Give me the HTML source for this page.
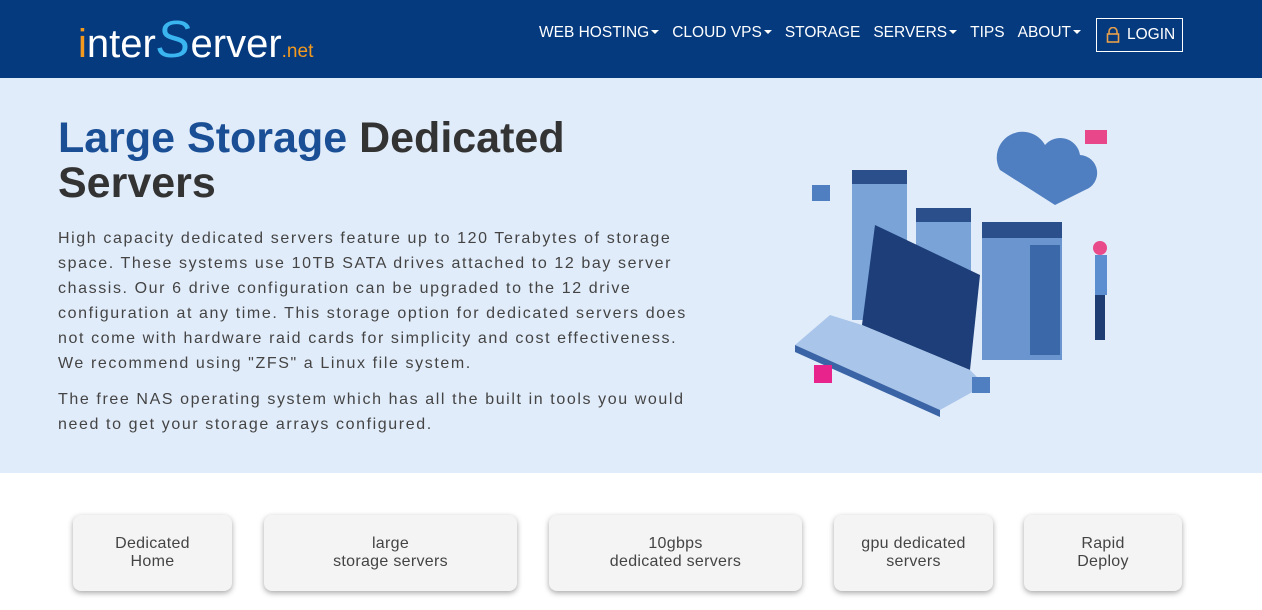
<!DOCTYPE html>
<html><head><style>
*{margin:0;padding:0;box-sizing:border-box}
body{width:1262px;height:610px;overflow:hidden;font-family:"Liberation Sans",sans-serif;background:#fff}
.hd{height:78px;background:#063a7f;position:relative}
.logo{position:absolute;left:78px;top:10px;color:#fff;font-size:40px;font-weight:300;letter-spacing:0px;white-space:nowrap}
.logo .i{color:#f39a1e}.logo .s{color:#3ab5f0;font-size:52px;font-style:italic}
.logo .n{color:#f39a1e;font-size:19px}
.nav{position:absolute;top:24px;left:539px;color:#fff;font-size:15.5px;display:flex;gap:13px;white-space:nowrap}
.nav span.c:after{content:"";display:inline-block;border:4px solid transparent;border-top:4px solid #fff;border-bottom:0;margin-left:2px;vertical-align:3px}
.login{position:absolute;left:1096px;top:18px;width:87px;height:34px;border:1px solid #fff;color:#fff;font-size:15.5px;padding:7px 0 0 30px}
.hero{height:395px;background:#e1ecfa;position:relative}
h1{position:absolute;left:58px;top:38px;font-size:43px;line-height:45px;color:#333;font-weight:bold;white-space:nowrap}
h1 b{color:#1a4f96}
.p{position:absolute;left:58px;top:148px;font-size:16px;line-height:25px;color:#444;letter-spacing:1.6px;white-space:nowrap}
.p2{top:309px}
.card{position:absolute;top:515px;height:76px;background:#f4f4f4;border-radius:8px;box-shadow:0 2px 6px rgba(0,0,0,.35);text-align:center;font-size:16px;line-height:18px;color:#444;padding-top:20px;letter-spacing:.3px}
</style></head><body>
<div class="hd">
<div class="logo"><span class="i">i</span>nter<span class="s">S</span>erver<span class="n">.net</span></div>
<div class="nav"><span class="c">WEB HOSTING</span><span class="c">CLOUD VPS</span><span>STORAGE</span><span class="c">SERVERS</span><span>TIPS</span><span class="c">ABOUT</span></div>
<div class="login"><svg style="position:absolute;left:9px;top:8px" width="14" height="16" viewBox="0 0 14 16"><path d="M3 7V4.5a4 4 0 0 1 8 0V7" fill="none" stroke="#e8a04a" stroke-width="1.6"/><rect x="1.5" y="7" width="11" height="8" fill="none" stroke="#e8a04a" stroke-width="1.6"/></svg>LOGIN</div>
</div>
<div class="hero">
<h1><b>Large Storage</b> Dedicated<br>Servers</h1>
<div class="p">High capacity dedicated servers feature up to 120 Terabytes of storage<br>space. These systems use 10TB SATA drives attached to 12 bay server<br>chassis. Our 6 drive configuration can be upgraded to the 12 drive<br>configuration at any time. This storage option for dedicated servers does<br>not come with hardware raid cards for simplicity and cost effectiveness.<br>We recommend using "ZFS" a Linux file system.</div>
<div class="p p2">The free NAS operating system which has all the built in tools you would<br>need to get your storage arrays configured.</div>
<svg style="position:absolute;left:780px;top:32px" width="380" height="320" viewBox="0 0 380 320">
<path d="M220 60 a25 25 0 0 1 45-25 a20 20 0 0 1 35 10 a18 18 0 0 1 5 35 L275 95Z" fill="#4f7fc0"/>
<rect x="72" y="60" width="55" height="150" fill="#7aa3d8"/><rect x="72" y="60" width="55" height="14" fill="#2a4f8a"/>
<rect x="136" y="98" width="55" height="140" fill="#7aa3d8"/><rect x="136" y="98" width="55" height="14" fill="#2a4f8a"/>
<rect x="202" y="112" width="80" height="138" fill="#6b95cf"/><rect x="202" y="112" width="80" height="16" fill="#2a4f8a"/>
<rect x="250" y="135" width="30" height="110" fill="#3b68a8"/>
<path d="M95 115 L200 165 L190 260 L82 215Z" fill="#1d3e78"/>
<path d="M82 215 L190 260 L205 275 L160 300 L15 235 L50 205Z" fill="#a9c5ea"/>
<path d="M15 235 L160 300 L160 307 L15 242Z" fill="#3a64a6"/>
<rect x="315" y="145" width="12" height="40" fill="#5a8ed0"/><rect x="315" y="185" width="10" height="45" fill="#1e3d72"/>
<circle cx="320" cy="138" r="7" fill="#e84a8a"/>
<rect x="305" y="20" width="22" height="14" fill="#e8488a"/>
<rect x="34" y="255" width="18" height="18" fill="#e8248c"/>
<rect x="32" y="75" width="18" height="16" fill="#4f7fc0"/><rect x="192" y="267" width="18" height="16" fill="#4f7fc0"/>
</svg>
</div>
<div class="card" style="left:73px;width:159px">Dedicated<br>Home</div>
<div class="card" style="left:264px;width:253px">large<br>storage servers</div>
<div class="card" style="left:549px;width:253px">10gbps<br>dedicated servers</div>
<div class="card" style="left:834px;width:159px">gpu dedicated<br>servers</div>
<div class="card" style="left:1024px;width:158px">Rapid<br>Deploy</div>
</body></html>
